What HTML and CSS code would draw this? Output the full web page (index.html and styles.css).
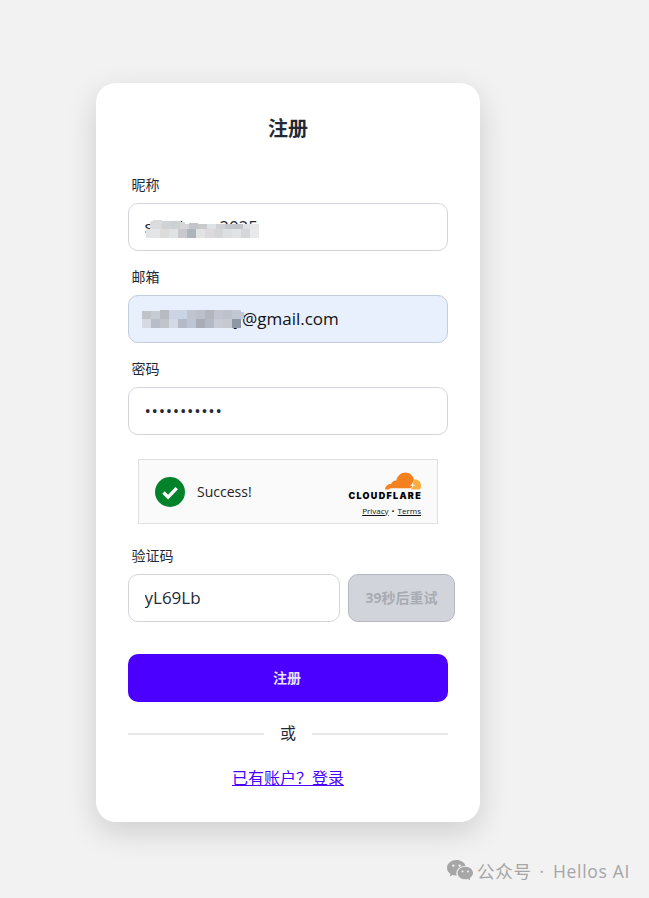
FILE: index.html
```html
<!DOCTYPE html>
<html lang="zh-CN">
<head>
<meta charset="utf-8">
<title>注册</title>
<link rel="stylesheet" href="styles.css">
</head>
<body>
<main class="card">
  <h1 class="title">注册</h1>
  <div class="field">
    <label class="label">昵称</label>
    <div class="input-wrap">
      <input class="input" type="text" value="sxxxixxxx2025">
      <svg class="mosaic mosaic-name" width="114" height="18" viewBox="0 0 114 18" aria-hidden="true">
        <g shape-rendering="crispEdges">
          <path fill="#d9dbdd" d="M5 2q2-2 7-2h5v9H5z"/>
          <rect x="17" y="1" width="9" height="8" fill="#d0d3d6"/><rect x="26" y="1" width="9" height="8" fill="#cdd1d4"/>
          <rect x="35" y="2" width="5" height="7" fill="#d4d6d8"/><rect x="44" y="3" width="9" height="6" fill="#c2c5ca"/>
          <rect x="53" y="4" width="9" height="5" fill="#c8cacc"/><rect x="62" y="4" width="9" height="5" fill="#dfe2e4"/>
          <rect x="71" y="4" width="9" height="5" fill="#cfd1d5"/><rect x="80" y="4" width="9" height="5" fill="#c3c6cc"/>
          <rect x="89" y="4" width="9" height="5" fill="#c1c4ca"/><rect x="98" y="4" width="7" height="5" fill="#dfe1e4"/>
          <rect x="105" y="4" width="9" height="5" fill="#e6e7e9"/>
          <rect x="40" y="4" width="4" height="5" fill="#d4d6d8"/>
          <rect x="1" y="9" width="4" height="9" fill="#e2e3e4"/>
          <rect x="5" y="9" width="10" height="9" fill="#e4e5e6"/><rect x="15" y="9" width="9" height="9" fill="#dcdcda"/>
          <rect x="24" y="9" width="9" height="9" fill="#e0e3e4"/><rect x="33" y="9" width="9" height="9" fill="#c8c8ce"/>
          <rect x="42" y="9" width="9" height="9" fill="#aeb4bb"/><rect x="51" y="9" width="9" height="9" fill="#e2e3e5"/>
          <rect x="60" y="9" width="9" height="9" fill="#ddd9dc"/><rect x="69" y="9" width="9" height="9" fill="#d5d6d8"/>
          <rect x="78" y="9" width="9" height="9" fill="#dde0e3"/><rect x="87" y="9" width="9" height="9" fill="#e2e3e5"/>
          <rect x="96" y="9" width="9" height="9" fill="#d5d6d9"/><rect x="105" y="9" width="9" height="9" fill="#e8e9eb"/>
        </g>
      </svg>
    </div>
  </div>
  <div class="field">
    <label class="label">邮箱</label>
    <div class="input-wrap">
      <input class="input input-autofill" type="text" value="xxxxxxxxxxy@gmail.com">
      <svg class="mosaic mosaic-mail" width="104" height="18" viewBox="0 0 104 18" aria-hidden="true">
        <g shape-rendering="crispEdges">
          <rect y="1" width="9" height="8" fill="#c0c3ca"/><rect x="9" y="1" width="9" height="8" fill="#c6cbd4"/>
          <rect x="18" y="0" width="9" height="9" fill="#b7bac1"/><rect x="27" y="0" width="9" height="9" fill="#cdd4e1"/>
          <rect x="36" y="0" width="9" height="9" fill="#c9d5e5"/><rect x="45" y="0" width="9" height="9" fill="#bfc4cd"/>
          <rect x="54" y="0" width="9" height="9" fill="#bbc0ca"/><rect x="63" y="0" width="9" height="9" fill="#b3b6bd"/>
          <rect x="72" y="0" width="9" height="9" fill="#c0c5d0"/><rect x="81" y="0" width="9" height="9" fill="#bcc1cc"/>
          <rect x="90" y="0" width="9" height="9" fill="#c2c8d3"/><rect x="99" y="2" width="3" height="7" fill="#c2c8d3"/>
          <rect y="9" width="9" height="9" fill="#d7dae1"/><rect x="9" y="9" width="9" height="9" fill="#b9bdc9"/>
          <rect x="18" y="9" width="9" height="9" fill="#c1c4cb"/><rect x="27" y="9" width="9" height="9" fill="#d3d9e5"/>
          <rect x="36" y="9" width="9" height="9" fill="#b5bac9"/><rect x="45" y="9" width="9" height="9" fill="#bcc6d4"/>
          <rect x="54" y="9" width="9" height="9" fill="#a9adb6"/><rect x="63" y="9" width="9" height="9" fill="#b4bac5"/>
          <rect x="72" y="9" width="9" height="9" fill="#c7ccd7"/><rect x="81" y="9" width="9" height="9" fill="#c6c9d2"/>
          <rect x="90" y="9" width="9" height="9" fill="#8f97a5"/>
        </g>
      </svg>
    </div>
  </div>
  <div class="field">
    <label class="label">密码</label>
    <input class="input input-pass" type="password" value="12345678901">
  </div>
  <div class="turnstile">
    <svg class="check" width="30" height="30" viewBox="0 0 30 30" aria-hidden="true">
      <circle cx="15" cy="15" r="15" fill="#03822c"/>
      <path d="M8.5 15.500l4.600 4.600 8.600-9" fill="none" stroke="#fff" stroke-width="3.400"/>
    </svg>
    <span class="success">Success!</span>
    <div class="cf">
      <svg class="cloud" width="36" height="18" viewBox="0 0 36 18" aria-hidden="true">
        <path fill="#f48120" d="M0 17.500c.2-3 2.400-5.200 5.200-5.400.3-.1.6-.1.9 0 .7-2.300 2.800-3.800 5.200-3.600 1-4.500 4.800-8 9-8 4.200 0 7.600 2.800 8.600 6.800L27.300 14c-.4 1.500-1.500 2.300-3 2.300H5.500c-1 0-1 .6-1 1.200z"/>
        <path fill="#faad3f" d="M29 7.500h1c3.400 0 6 2.600 6 6 0 1.400-.3 2.800-1 4H26c.9-2 1.800-6 3-10z"/>
        <path fill="#fff" d="M27.500 10l.6 2.600 2.400.6-2.400.6-.6 2.600-.6-2.600-2.400-.6 2.400-.6z"/>
      </svg>
      <span class="cf-name">CLOUDFLARE</span>
      <span class="cf-links"><a class="cf-link">Privacy</a><i class="cf-dot">•</i><a class="cf-link">Terms</a></span>
    </div>
  </div>
  <div class="field field-code">
    <label class="label">验证码</label>
    <div class="code-row">
      <input class="input input-code" type="text" value="yL69Lb">
      <button class="retry" type="button" disabled>39秒后重试</button>
    </div>
  </div>
  <button class="submit" type="button">注册</button>
  <div class="divider"><span class="line"></span><span class="or">或</span><span class="line"></span></div>
  <p class="login"><a class="login-link" href="#">已有账户？登录</a></p>
</main>
<div class="watermark">
  <svg width="26" height="22" viewBox="0 0 26 22" aria-hidden="true">
    <path fill="#a6a6a6" d="M9.500 0C4.300 0 0 3.500 0 7.900c0 2.500 1.400 4.600 3.500 6l-.8 2.500 2.900-1.500c1.100.3 2.200.5 3.400.5h.7c-.3-.8-.4-1.500-.4-2.300 0-4 3.800-7.200 8.600-7.200h.6C17.600 2.500 13.900 0 9.500 0z"/>
    <path fill="#a6a6a6" d="M26 13c0-3.500-3.400-6.300-7.700-6.300S10.600 9.500 10.600 13s3.400 6.300 7.700 6.300c.9 0 1.800-.1 2.600-.4l2.400 1.300-.6-2.100C24.600 16.900 26 15 26 13z"/>
    <g fill="#f2f2f2"><circle cx="6.400" cy="5.600" r="1.200"/><circle cx="12.600" cy="5.600" r="1.200"/><circle cx="15.500" cy="11.600" r="1"/><circle cx="21" cy="11.600" r="1"/></g>
  </svg>
  <span class="wm-text">公众号<span class="wm-dot">·</span>Hellos AI</span>
</div>
</body>
</html>
```
FILE: styles.css
```css
* { box-sizing: border-box; }
html, body { margin: 0; padding: 0; }
body {
  min-height: 898px;
  background: #f2f2f2;
  padding: 83px 0 0 96px;
  color: #1f2937;
  font-family: "Open Sans", "Noto Sans CJK SC", sans-serif;
  overflow: hidden;
}
.card {
  width: 384px;
  height: 739px;
  background: #fff;
  border-radius: 20px;
  padding: 32px;
  box-shadow: 0 10px 30px rgba(0, 0, 0, .15);
}
.title {
  margin: 0 0 32px;
  height: 28px;
  line-height: 28px;
  font-size: 20px;
  font-weight: 700;
  text-align: center;
  color: #1f2937;
}
.field { margin-bottom: 16px; }
.label {
  display: block;
  height: 28px;
  padding: 0 3.5px;
  font-size: 14px;
  line-height: 20px;
  color: #1f2937;
}
.input-wrap { position: relative; }
.input {
  display: block;
  width: 320px;
  height: 48px;
  padding: 0 15.5px 2px;
  border: 1px solid #d1d5db;
  border-radius: 10px;
  background: #fff;
  color: #1f2937;
  font: 400 17px "Open Sans", "Noto Sans CJK SC", sans-serif;
  outline: none;
}
.input-autofill {
  background: #e8f0fe;
  border-color: #c3cddd;
  color: #111;
}
.input-pass { letter-spacing: .7px; }
.mosaic { position: absolute; display: block; }
.mosaic-name { left: 17px; top: 17px; }
.mosaic-mail { left: 14px; top: 15px; }
.turnstile {
  display: flex;
  align-items: center;
  width: 300px;
  height: 65px;
  margin: 24px auto 22px;
  padding: 0 16px;
  background: #fafafa;
  border: 1px solid #e0e0e0;
  color: #232323;
}
.check { flex: none; }
.success { margin-left: 12px; font-size: 14px; font-family: "Open Sans", sans-serif; color: #232323; }
.cf {
  margin-left: auto;
  display: flex;
  flex-direction: column;
  align-items: flex-end;
  margin-top: 4px;
}
.cloud { display: block; margin-bottom: 1px; }
.cf-name {
  font: 900 9px/10px "Inter", sans-serif;
  letter-spacing: 1.3px;
  margin-right: -1px;
  color: #000;
}
.cf-links {
  display: flex;
  align-items: center;
  gap: 3px;
  margin-top: 5px;
  font: 400 8px/10px "Open Sans", sans-serif;
  color: #111;
}
.cf-link { text-decoration: underline; color: #111; }
.cf-dot { font-style: normal; }
.field-code { margin-bottom: 32px; }
.code-row { display: flex; gap: 8px; }
.input-code { flex: none; width: 212px; }
.retry {
  flex: none;
  height: 48px;
  padding: 0 16.5px 2px;
  border: 1px solid #b6b8be;
  border-radius: 10px;
  background: #d1d5db;
  color: #a8abb2;
  font: 700 14px "Open Sans", "Noto Sans CJK SC", sans-serif;
  white-space: nowrap;
}
.submit {
  display: block;
  width: 320px;
  height: 48px;
  padding: 0 2px 2px 0;
  border: 0;
  border-radius: 10px;
  background: #4b00ff;
  color: #e6e0ff;
  font: 700 14px "Noto Sans CJK SC", sans-serif;
}
.divider {
  display: flex;
  align-items: center;
  gap: 16px;
  margin-top: 20px;
  height: 24px;
}
.line { flex: 1; height: 2px; background: #e8e8e8; }
.or { font-size: 16px; line-height: 22px; height: 24px; color: #1f2937; }
.login {
  margin: 20px 0 0;
  text-align: center;
  font-size: 16px;
  line-height: 24px;
}
.login-link { color: #4b00ff; text-decoration: underline; }
.watermark {
  position: absolute;
  left: 447px;
  top: 860px;
  display: flex;
  align-items: center;
  gap: 4px;
  color: #a6a6a6;
}
.wm-text { font-size: 17.5px; line-height: 22px; letter-spacing: .7px; white-space: nowrap; }
.wm-dot { margin: 0 8px; }
```
